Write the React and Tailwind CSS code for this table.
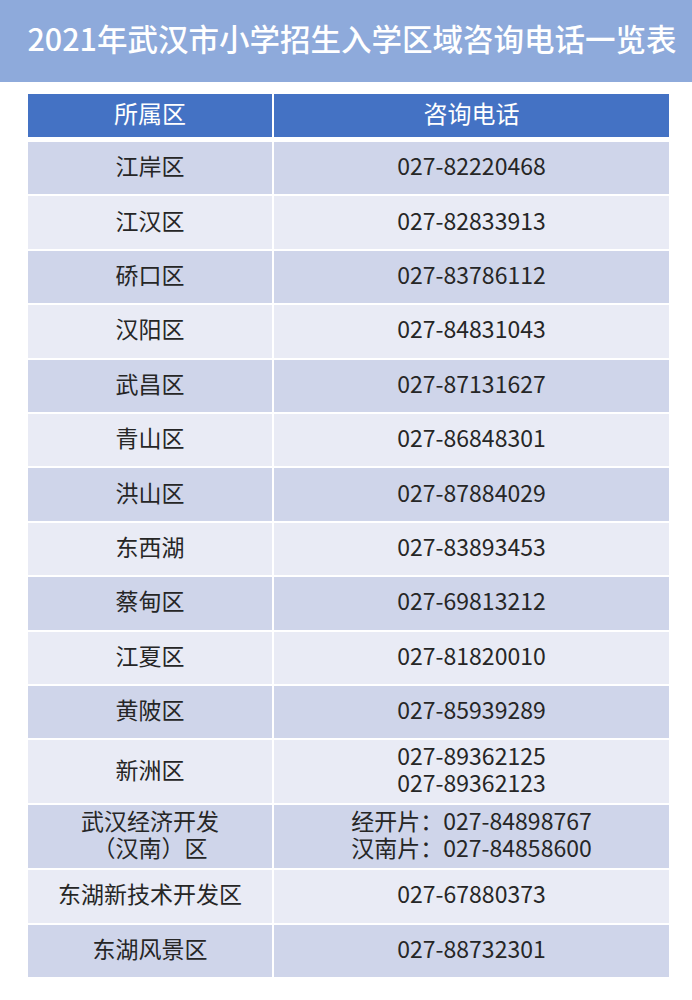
const rows = [
  { area: ['江岸区'], phone: ['027-82220468'] },
  { area: ['江汉区'], phone: ['027-82833913'] },
  { area: ['硚口区'], phone: ['027-83786112'] },
  { area: ['汉阳区'], phone: ['027-84831043'] },
  { area: ['武昌区'], phone: ['027-87131627'] },
  { area: ['青山区'], phone: ['027-86848301'] },
  { area: ['洪山区'], phone: ['027-87884029'] },
  { area: ['东西湖'], phone: ['027-83893453'] },
  { area: ['蔡甸区'], phone: ['027-69813212'] },
  { area: ['江夏区'], phone: ['027-81820010'] },
  { area: ['黄陂区'], phone: ['027-85939289'] },
  { area: ['新洲区'], phone: ['027-89362125', '027-89362123'], tall: true },
  { area: ['武汉经济开发', '（汉南）区'], phone: ['经开片：027-84898767', '汉南片：027-84858600'], tall: true },
  { area: ['东湖新技术开发区'], phone: ['027-67880373'] },
  { area: ['东湖风景区'], phone: ['027-88732301'] },
];

const font = { fontFamily: '"Noto Sans CJK SC", "Noto Sans", sans-serif' };

const Cell = ({ lines, dark, tall }) => (
  <div
    className={`flex flex-col items-center justify-center pb-[5px] text-[23px] leading-[27px] text-[#262626] ${
      tall ? 'h-[63px]' : 'h-[52.4px]'
    } ${dark ? 'bg-[#cfd5ea]' : 'bg-[#e9ebf5]'}`}
  >
    {lines.map((l) => (
      <span key={l} className="whitespace-nowrap">{l}</span>
    ))}
  </div>
);

export default function App() {
  return (
    <div className="w-[692px] h-[1000px] bg-white" style={font}>
      <div className="h-[82px] bg-[#8eaadb] flex items-center justify-center pb-[4px]">
        <h1 className="text-[30.5px] font-medium text-white whitespace-nowrap pl-[12px]">
          2021年武汉市小学招生入学区域咨询电话一览表
        </h1>
      </div>

      <div className="ml-[28px] w-[641px] mt-[12px]">
        <div className="grid grid-cols-[244px_395px] gap-x-[2px] h-[43px] mb-[5px]">
          <div className="bg-[#4472c4] text-white text-[24px] flex items-center justify-center pb-[5px]">所属区</div>
          <div className="bg-[#4472c4] text-white text-[24px] flex items-center justify-center pb-[5px]">咨询电话</div>
        </div>
        <div className="grid grid-cols-[244px_395px] gap-[2px]">
          {rows.map((r, i) => (
            <div key={r.area[0]} className="contents">
              <Cell lines={r.area} dark={i % 2 === 0} tall={r.tall} />
              <Cell lines={r.phone} dark={i % 2 === 0} tall={r.tall} />
            </div>
          ))}
        </div>
      </div>
    </div>
  );
}
